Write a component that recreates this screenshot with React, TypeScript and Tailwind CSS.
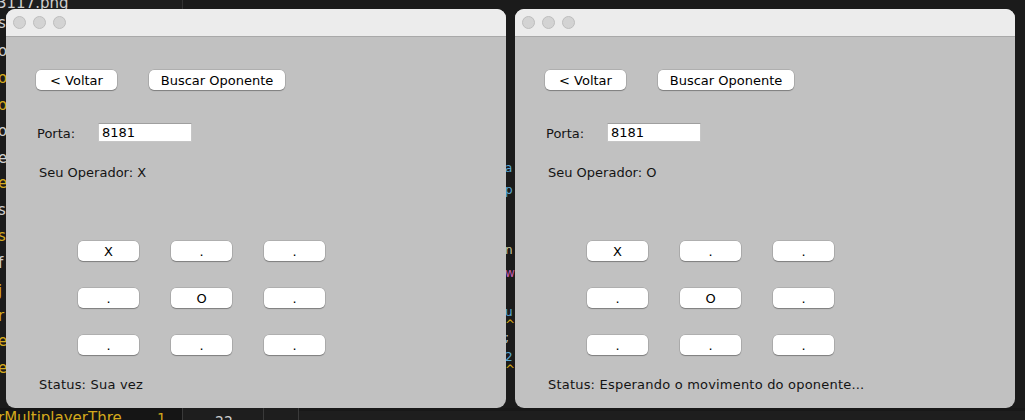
import React from "react";

const FONT = { fontFamily: '"DejaVu Sans", "Noto Sans", sans-serif' };

function MacButton({ label, w }: { label: string; w: string }) {
  return (
    <div
      className={`${w} h-[20px] bg-white rounded-[5px] flex items-center justify-center text-[13px] leading-none text-black shadow-[0_0_0_0.5px_rgba(0,0,0,0.18),0_1px_1px_rgba(0,0,0,0.28)]`}
    >
      {label}
    </div>
  );
}

function GameWindow({ op, status, board }: { op: string; status: string; board: string[] }) {
  return (
    <div className="w-[500px] h-[399px] rounded-[9px] overflow-hidden bg-[#c1c1c1] flex flex-col" style={FONT}>
      <div className="h-[28px] bg-[#ececec] border-b border-[#a9a9a9] flex items-center gap-[7px] pl-[7px] shrink-0">
        <span className="w-[13px] h-[13px] rounded-full bg-[#d3d3d3] border border-[#bdbdbd]" />
        <span className="w-[13px] h-[13px] rounded-full bg-[#d3d3d3] border border-[#bdbdbd]" />
        <span className="w-[13px] h-[13px] rounded-full bg-[#d3d3d3] border border-[#bdbdbd]" />
      </div>
      <div className="flex flex-col text-[13px] text-[#141414]">
        <div className="flex gap-[32px] pl-[30px] mt-[33px]">
          <MacButton label="< Voltar" w="w-[81px]" />
          <MacButton label="Buscar Oponente" w="w-[136px]" />
        </div>
        <div className="flex items-center pl-[31px] mt-[33px] h-[19px]">
          <span className="w-[61px] pt-[2px]">Porta:</span>
          <div className="w-[94px] h-[19px] bg-white border border-[#c6c6c6] border-t-[#9f9f9f] flex items-center pl-[3px] text-black">
            8181
          </div>
        </div>
        <div className="pl-[33px] mt-[23px] h-[16px] leading-[16px]">Seu Operador: {op}</div>
        <div className="grid grid-cols-[61px_61px_61px] gap-x-[32px] gap-y-[27px] pl-[72px] mt-[60px]">
          {board.map((c, i) => (
            <MacButton key={i} label={c} w="w-[61px]" />
          ))}
        </div>
        <div className="pl-[33px] mt-[22px] h-[16px] leading-[16px] tracking-[0.2px]">{status}</div>
      </div>
    </div>
  );
}

const leftChars: [string, number, boolean][] = [
  ["s", 25, false],
  ["o", 53, false],
  ["o", 80, true],
  ["o", 107, true],
  ["o", 133, false],
  ["e", 160, false],
  ["e", 185, true],
  ["s", 212, false],
  ["s", 238, true],
  ["f", 265, false],
  ["j", 293, true],
  ["r", 318, true],
  ["e", 343, true],
  ["e", 370, true],
];

const midChars: [string, number, string][] = [
  ["a", 168, "#5aa9d6"],
  ["p", 190, "#5aa9d6"],
  ["n", 250, "#c9c9a0"],
  ["w", 273, "#c45fb0"],
  ["u", 312, "#5aa9d6"],
  ["^", 325, "#d7a917"],
  [";", 338, "#cfcfcf"],
  ["2", 357, "#5aa9d6"],
  ["^", 370, "#d7a917"],
];

export default function App() {
  const board = ["X", ".", ".", ".", "O", ".", ".", ".", "."];
  return (
    <div className="relative w-[1025px] h-[420px] bg-[#1b1b1b] overflow-hidden" style={FONT}>
      {/* editor background fragments */}
      <div className="absolute left-0 top-0 w-[182px] h-[9px] bg-[#1e1e1e]" />
      <div className="absolute left-[182px] top-0 w-[1px] h-[9px] bg-[#333]" />
      <span className="absolute left-[-3px] top-[-8px] text-[15px] text-[#d0d0d0]">3117.png</span>
      {leftChars.map(([c, y, yel], i) => (
        <span
          key={i}
          className={`absolute left-[-2px] text-[15px] leading-none ${yel ? "text-[#d4a91c]" : "text-[#cfcfcf]"}`}
          style={{ top: y - 9 }}
        >
          {c}
        </span>
      ))}
      {midChars.map(([c, y, col], i) => (
        <span
          key={i}
          className="absolute left-[505px] text-[12px] leading-none"
          style={{ top: y - 6, color: col }}
        >
          {c}
        </span>
      ))}
      <div className="absolute left-0 top-[408px] w-[1025px] h-[12px] flex">
        <div className="w-[182px] h-full bg-[#151515] relative">
          <span className="absolute left-[-2px] top-[3px] text-[15px] leading-none text-[#d4a91c]">rMultiplayerThre</span>
          <span className="absolute left-[157px] top-[3px] text-[14px] leading-none text-[#d4a91c]">1</span>
        </div>
        <div className="w-[1px] h-full bg-[#3a3a3a]" />
        <div className="w-[80px] h-full bg-[#1e1e1e] relative">
          <span className="absolute left-[32px] top-[6px] text-[14px] leading-none text-[#cfcfcf]">22</span>
        </div>
        <div className="w-[1px] h-full bg-[#3a3a3a]" />
        <div className="w-[34px] h-full bg-[#1e1e1e]" />
        <div className="w-[1px] h-full bg-[#3a3a3a]" />
        <div className="flex-1 h-full bg-[#1e1e1e] border-t-[3px] border-[#181818]" />
      </div>
      {/* windows */}
      <div className="absolute left-0 top-0 flex gap-[9px] pl-[6px] pt-[9px]">
        <GameWindow op="X" status="Status: Sua vez" board={board} />
        <GameWindow op="O" status="Status: Esperando o movimento do oponente..." board={board} />
      </div>
    </div>
  );
}
